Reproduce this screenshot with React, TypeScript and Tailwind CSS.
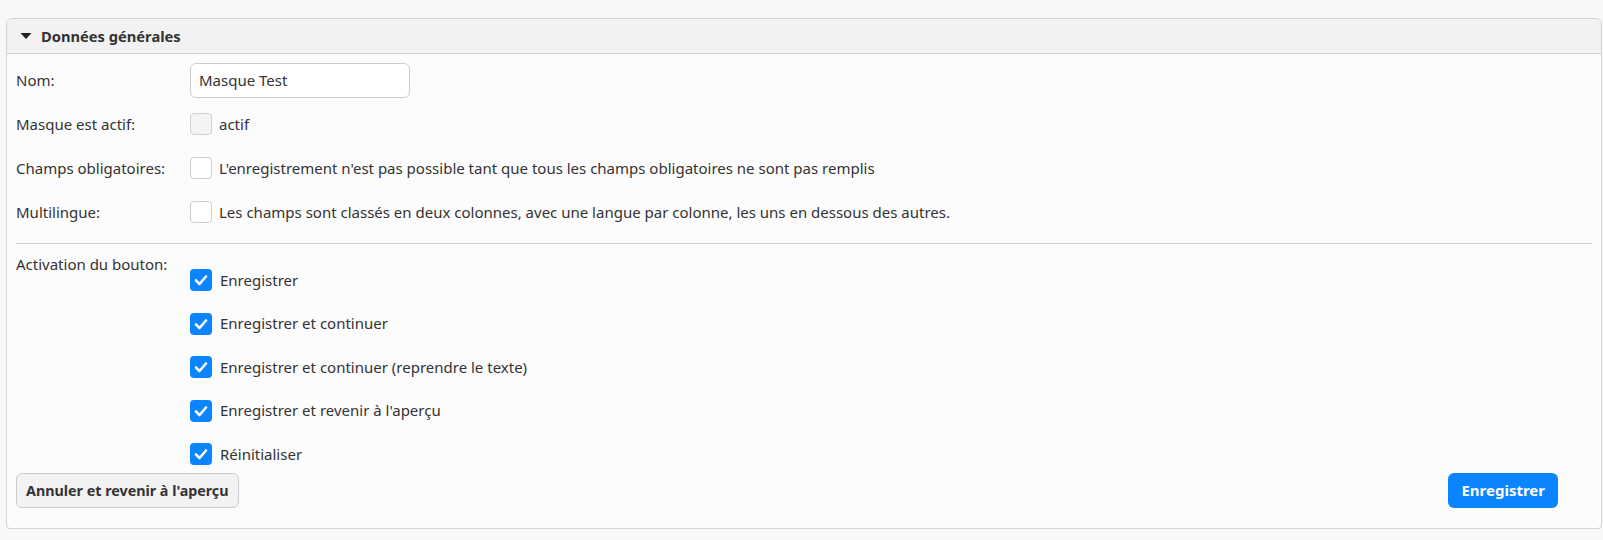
import React from "react";

const font = { fontFamily: '"Noto Sans", "Open Sans", sans-serif' };

function Check({ checked, disabled }: { checked?: boolean; disabled?: boolean }) {
  if (checked) {
    return (
      <span className="flex h-[22px] w-[22px] shrink-0 items-center justify-center rounded-[4px] bg-[#0a84ff]">
        <svg width="16" height="16" viewBox="0 0 16 16" fill="none">
          <polyline
            points="3,8.5 6.5,12 13,4.5"
            stroke="white"
            strokeWidth="2.6"
            strokeLinecap="round"
            strokeLinejoin="round"
          />
        </svg>
      </span>
    );
  }
  return (
    <span
      className={`block h-[22px] w-[22px] shrink-0 rounded-[4px] border border-[#cfcfcf] ${
        disabled ? "bg-[#f4f4f4]" : "bg-white"
      }`}
    />
  );
}

function Row({ label, children }: { label: string; children: React.ReactNode }) {
  return (
    <div className="flex h-[44px] items-center">
      <div className="w-[174px] shrink-0">{label}</div>
      <div className="flex items-center gap-[7px]">{children}</div>
    </div>
  );
}

const buttons = [
  "Enregistrer",
  "Enregistrer et continuer",
  "Enregistrer et continuer (reprendre le texte)",
  "Enregistrer et revenir à l'aperçu",
  "Réinitialiser",
];

export default function App() {
  return (
    <div className="min-h-[540px] bg-[#f8f8f8] pt-[18px] text-[15px] text-[#333]" style={font}>
      <div className="ml-[6px] mr-px overflow-hidden rounded-t-[6px] rounded-b-[4px] border border-[#d4d4d4] bg-[#fcfcfc]">
        <div className="flex h-[35px] items-center gap-[9px] border-b border-[#d4d4d4] bg-[#f2f2f2] pl-[13px] font-bold">
          <svg width="12" height="8" viewBox="0 0 12 8">
            <polygon points="0.5,1 11.5,1 6,7" fill="#222" />
          </svg>
          <span className="text-[14.7px]">Données générales</span>
        </div>

        <div className="px-[9px] pt-[4px] pb-[20px]">
          <Row label="Nom:">
            <div className="flex h-[35px] w-[220px] items-center rounded-[6px] border border-[#cccccc] bg-white px-[8px]">
              Masque Test
            </div>
          </Row>
          <Row label="Masque est actif:">
            <Check disabled />
            <span>actif</span>
          </Row>
          <Row label="Champs obligatoires:">
            <Check />
            <span>
              L'enregistrement n'est pas possible tant que tous les champs obligatoires ne sont pas remplis
            </span>
          </Row>
          <Row label="Multilingue:">
            <Check />
            <span>
              Les champs sont classés en deux colonnes, avec une langue par colonne, les uns en dessous des autres.
            </span>
          </Row>

          <div className="mt-[9px] border-t border-[#cfcfcf]" />

          <div className="flex">
            <div className="w-[174px] shrink-0 pt-[10px] leading-[20px]">Activation du bouton:</div>
            <div className="flex flex-col gap-[21.5px] pt-[25px]">
              {buttons.map((b) => (
                <div key={b} className="flex h-[22px] items-center gap-[8px]">
                  <Check checked />
                  <span>{b}</span>
                </div>
              ))}
            </div>
          </div>

          <div className="mt-[8px] flex items-center justify-between">
            <button className="h-[35px] rounded-[6px] border border-[#cccccc] bg-[#f2f2f2] px-[9px] text-[14.3px] font-bold text-[#333]">
              Annuler et revenir à l'aperçu
            </button>
            <button className="mr-[34px] h-[35px] rounded-[6px] bg-[#0a84ff] px-[13px] font-bold text-white">
              Enregistrer
            </button>
          </div>
        </div>
      </div>
    </div>
  );
}
